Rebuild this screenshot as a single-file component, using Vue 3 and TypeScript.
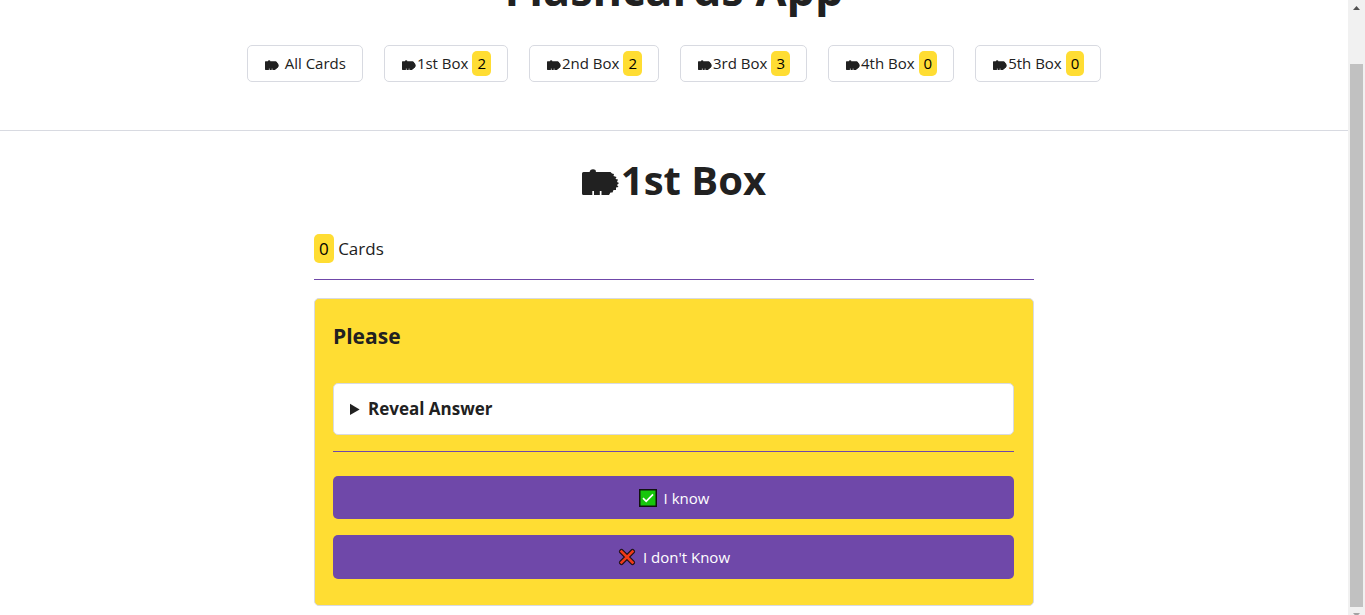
<script setup lang="ts">
import { h } from 'vue'

interface Box {
  name: string
  count?: number
}

const boxes: Box[] = [
  { name: 'All Cards' },
  { name: '1st Box', count: 2 },
  { name: '2nd Box', count: 2 },
  { name: '3rd Box', count: 3 },
  { name: '4th Box', count: 0 },
  { name: '5th Box', count: 0 },
]

const BoxIcon = () =>
  h('svg', { class: 'box-icon', viewBox: '0 0 37 26', 'aria-hidden': 'true' }, [
    h('path', {
      fill: 'currentColor',
      d: 'M1.500 3H7.500L8.500 1Q11-.5 13.500 1L14 3H28.500L30 4.500L32 5L31.500 7L34.500 8L33.500 10L36 10.500L35 13L37 14L35 16L36.500 18L34 18.500L34 21L31.500 21L30.500 23.500L28.500 23.500L27 26H19.500V22H17.800V26H12V22H10.300V26H1.500Q0 26 0 24.500V4.500Q0 3 1.500 3Z',
    }),
  ])
</script>

<template>
  <div class="window">
    <div class="page">
      <header class="top">
        <h1>Flashcards App</h1>
        <nav>
          <a v-for="box in boxes" :key="box.name" href="#">
            <BoxIcon /><span :class="{ spaced: box.count === undefined }">{{ box.name }}</span>
            <mark v-if="box.count !== undefined">{{ box.count }}</mark>
          </a>
        </nav>
      </header>
      <main>
        <h2><BoxIcon />1st Box</h2>
        <p class="total"><mark>0</mark> Cards</p>
        <hr />
        <article>
          <h3>Please</h3>
          <details>
            <summary>Reveal Answer</summary>
          </details>
          <hr />
          <button type="button">
            <svg class="mark-icon" viewBox="0 0 18 18" aria-hidden="true">
              <rect x=".75" y=".75" width="16.500" height="16.500" fill="#16c60c" stroke="#10120f" stroke-width="1.500" />
              <path d="M4 9.200L7.200 12.400L14 5.300" fill="none" stroke="#fff" stroke-width="1.700" />
            </svg>
            I know
          </button>
          <button type="button">
            <svg class="mark-icon" viewBox="0 0 18 18" aria-hidden="true">
              <path d="M3.500 3.500L14.500 14.500M14.500 3.500L3.500 14.500" stroke="#1c1017" stroke-width="5" stroke-linecap="round" />
              <path d="M3.500 3.500L14.500 14.500M14.500 3.500L3.500 14.500" stroke="#f03a17" stroke-width="2.600" stroke-linecap="square" />
            </svg>
            I don't Know
          </button>
        </article>
      </main>
    </div>
    <div class="scrollbar" aria-hidden="true">
      <svg viewBox="0 0 17 17"><path d="M5 10L8.500 6L12 10Z" fill="#505050" /></svg>
      <div class="thumb"></div>
      <svg viewBox="0 0 17 17"><path d="M5 6L8.500 10L12 6Z" fill="#a3a3a3" /></svg>
    </div>
  </div>
</template>

<style>
body {
  margin: 0;
}
</style>

<style scoped>
.window {
  display: grid;
  grid-template-columns: 1fr 17px;
  height: 100vh;
  overflow: hidden;
  background: #fff;
  color: #212121;
  font-family: "Open Sans", "Noto Sans", sans-serif;
  font-size: 17px;
  font-weight: 400;
  line-height: 29px;
}
.page {
  min-width: 0;
  overflow: hidden;
}
.top {
  margin-top: -41px;
  padding-bottom: 48px;
  border-bottom: 1px solid #d8dae1;
  text-align: center;
}
h1,
h2,
h3 {
  margin: 0;
  font-weight: 700;
}
h1 {
  font-size: 45px;
  line-height: 60px;
}
nav {
  display: flex;
  justify-content: center;
  gap: 21px;
  padding-top: 26px;
}
nav a {
  display: flex;
  align-items: center;
  box-sizing: border-box;
  height: 37px;
  padding: 0 16px;
  border: 1px solid #d8dae1;
  border-radius: 5px;
  color: #212121;
  font-size: 15px;
  line-height: 25px;
  text-decoration: none;
}
.box-icon {
  width: 14px;
  height: 10px;
  margin: 2px 1px 0;
}
.spaced {
  padding-left: 5px;
}
mark {
  display: inline-block;
  padding: 0 5px;
  border-radius: 5px;
  background: #ffdd33;
  color: #000;
}
nav mark {
  margin-left: 4px;
}
main {
  width: 720px;
  max-width: 100%;
  margin: 0 auto;
}
h2 {
  padding-top: 22px;
  font-size: 40px;
  line-height: 54px;
  text-align: center;
}
h2 .box-icon {
  width: 37px;
  height: 26px;
  margin: 0 2px 0 0;
}
.total {
  margin: 27px 0 16px;
}
hr {
  height: 1px;
  margin: 0;
  border: 0;
  background: #6f48a9;
}
article {
  margin-top: 18px;
  padding: 18px 19px 26px 18px;
  border: 1px solid #d8dae1;
  border-radius: 5px;
  background: #ffdd33;
}
h3 {
  font-size: 21px;
  line-height: 38px;
}
details {
  margin: 28px 0 16px;
  padding: 11px 16px;
  border: 1px solid #d8dae1;
  border-radius: 5px;
  background: #fff;
}
summary {
  font-weight: 700;
  line-height: 28px;
}
button {
  display: flex;
  align-items: center;
  justify-content: center;
  gap: 7px;
  width: 100%;
  height: 43px;
  margin-top: 16px;
  padding: 0 0 0 1px;
  border: 0;
  border-radius: 5px;
  background: #6f48a9;
  color: #fff;
  font: 400 15px/24px "Open Sans", "Noto Sans", sans-serif;
}
button:last-child {
  height: 44px;
}
hr + button {
  margin-top: 24px;
}
.mark-icon {
  width: 18px;
  height: 18px;
}
.scrollbar {
  display: grid;
  grid-template-rows: 17px 1fr 8px;
  background: #f1f1f1;
}
.scrollbar svg {
  width: 17px;
  height: 17px;
}
.thumb {
  margin: 47px 2px 0;
  background: #c1c1c1;
}
</style>
